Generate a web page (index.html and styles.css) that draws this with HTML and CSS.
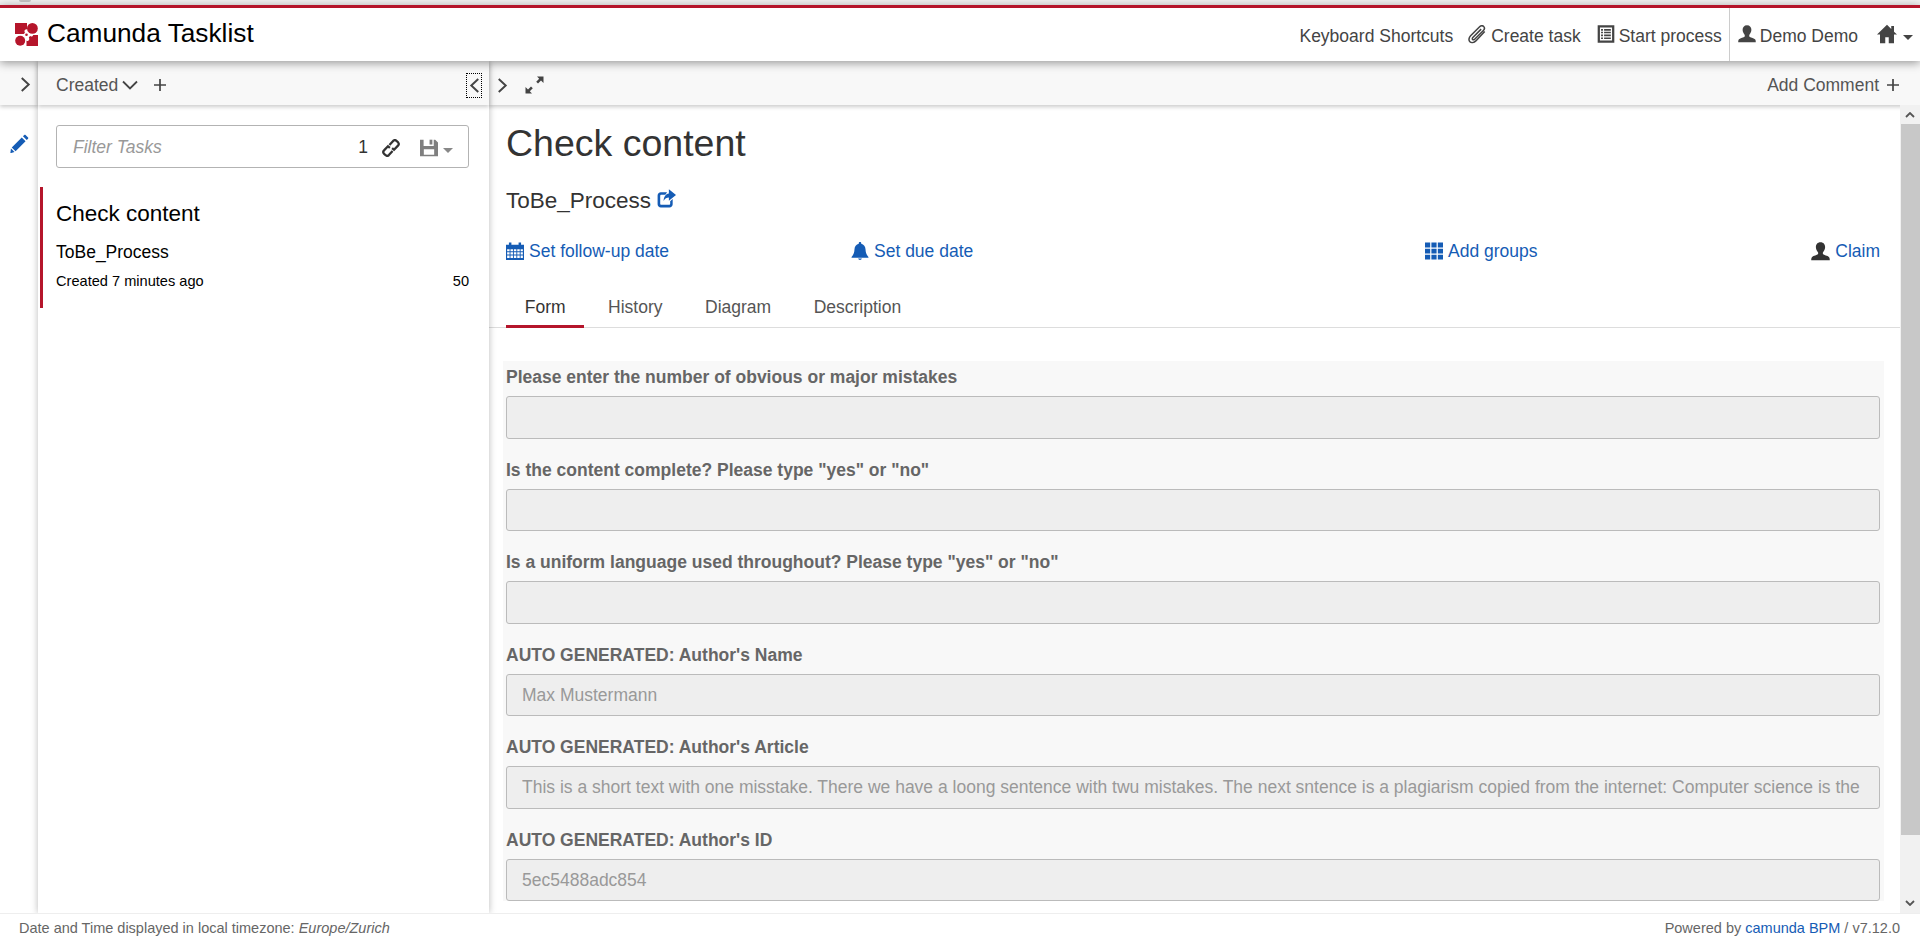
FILE: index.html
```html
<!DOCTYPE html>
<html lang="en">
<head>
  <meta charset="UTF-8" />
  <meta name="viewport" content="width=device-width, initial-scale=1.0" />
  <title>Camunda Tasklist</title>
  <link rel="stylesheet" href="styles.css">
</head>
<body>
  <svg class="sprite" xmlns="http://www.w3.org/2000/svg">
    <symbol id="i-user" viewBox="0 0 16 16"><path d="M8 .2C5.400.2 4.100 2.100 4.100 4.300c0 1.800.9 3.500 1.900 4.500v1.400c-.8 1-4 1.300-5.100 2.400-.6.6-.7 1.700-.7 2.700h15.600c0-1-.1-2.100-.7-2.700-1.100-1.100-4.300-1.400-5.100-2.400V8.800c1-1 1.900-2.700 1.900-4.500C11.900 2.100 10.600.2 8 .2z"/></symbol>
    <symbol id="i-home" viewBox="0 0 16 16"><path d="M8 .6L0 8.400h2.400v7h4.200v-4.800h2.800v4.800h4.200v-7H16l-2.400-2.300V1.600h-2.200v2.400z"/></symbol>
    <symbol id="i-clip" viewBox="0 0 16 16"><path fill="none" stroke="currentColor" stroke-width="1.300" d="M14.500 5.500L7 13.400c-1.500 1.500-3.800 1.900-5 .7-1.200-1.200-.9-3.500.6-5L10 1.700c1.100-1.100 2.700-1.300 3.600-.4.900.9.700 2.500-.4 3.600L6 12c-.5.500-1.300.6-1.700.2-.4-.4-.3-1.200.2-1.700L11.500 3.500"/></symbol>
    <symbol id="i-list" viewBox="0 0 16 16"><path fill-rule="evenodd" d="M.6.2h14.800v15.600H.6zM2.600 2.200v11.600h10.800V2.200z"/><path d="M3.600 3.600h1.700v1.400H3.600zM6.300 3.600h6v1.400h-6zM3.600 6h1.700v1.400H3.600zM6.300 6h6v1.400h-6zM3.600 8.500h1.700v1.400H3.600zM6.300 8.500h6v1.400h-6zM3.600 11h1.700v1.400H3.600zM6.300 11h6v1.400h-6z"/></symbol>
    <symbol id="i-calendar" viewBox="0 0 16 16"><path fill-rule="evenodd" d="M0 2.400h2.600V.4h2.200v2h6.400v-2h2.200v2H16V16H0zM1 6.400v1.900h2.200V6.400zm3 0v1.900h2.200V6.400zm3 0v1.900h2.200V6.400zm3 0v1.900h2.200V6.400zm3 0v1.900h2V6.400zM1 9.200v1.900h2.200V9.200zm3 0v1.900h2.200V9.200zm3 0v1.900h2.200V9.200zm3 0v1.900h2.200V9.200zm3 0v1.900h2V9.200zM1 12v2.300h2.200V12zm3 0v2.300h2.200V12zm3 0v2.300h2.200V12zm3 0v2.300h2.200V12zm3 0v2.300h2V12z"/></symbol>
    <symbol id="i-bell" viewBox="0 0 16 16"><path d="M8 0c-.7 0-1.100.5-1.100 1.100v.5C4.600 2.200 3.200 4.100 3.100 6.500c-.1 3-1 5.200-2.600 6.800v.7h15v-.7c-1.600-1.600-2.500-3.800-2.600-6.800-.1-2.400-1.500-4.300-3.800-4.900v-.5C9.100.5 8.700 0 8 0zM6.300 14.700c.2.800.9 1.300 1.700 1.300s1.500-.5 1.700-1.300z"/></symbol>
    <symbol id="i-grid" viewBox="0 0 16 16"><path d="M0 .5h4.600v4.300H0zM5.700.5h4.600v4.300H5.700zM11.400.5H16v4.300h-4.600zM0 5.900h4.600v4.300H0zM5.700 5.900h4.600v4.300H5.700zM11.400 5.900H16v4.300h-4.600zM0 11.300h4.600v4.300H0zM5.700 11.300h4.600v4.300H5.700zM11.400 11.300H16v4.300h-4.600z"/></symbol>
    <symbol id="i-share" viewBox="0 0 16 16"><path d="M3.200 2.800h5.300L7 4.900H3.600c-.5 0-.9.400-.9.900v6.600c0 .5.400.9.900.9h6.600c.5 0 .9-.4.900-.9v-2l2.100-2v4.400c0 1.500-1.200 2.700-2.700 2.700H3.200C1.700 15.500.5 14.300.5 12.800V5.500c0-1.500 1.200-2.700 2.700-2.700z"/><path d="M10 .2l6 4.800-6 4.900V7.200C8.200 7.200 6.700 8 5.600 10c0-3.300 1.700-6 4.400-6.300z"/></symbol>
    <symbol id="i-link" viewBox="0 0 16 16"><path fill="none" stroke="currentColor" stroke-width="2" d="M6.600 5.400l3.300-3.700c.9-.9 2-.9 2.900-.1l1.500 1.400c.8.900.8 2-.1 2.900l-3.500 3.700-1.700-1.500M9.400 10.600l-3.300 3.700c-.9.900-2 .9-2.900.1l-1.500-1.400c-.8-.9-.8-2 .1-2.900l3.500-3.700 1.700 1.500"/></symbol>
    <symbol id="i-save" viewBox="0 0 16 16"><path fill-rule="evenodd" d="M0 .6h3.200v5.600h9V.6h1.300L16 3.100v12.300H0zM3.400 9.200v4.800h9.200V9.200z"/><path d="M8.500.6H11v4.300H8.500z"/></symbol>
    <symbol id="i-pencil" viewBox="0 0 16 16"><path d="M12 .8c.3-.3.8-.3 1.100 0l2.100 2.100c.3.300.3.800 0 1.100l-1.100 1.100-3.200-3.200zM9.900 2.900l3.200 3.200-8.400 8.400-3.200-3.200zM.8 12.200l3 3-3.500 1z"/></symbol>
    <symbol id="i-expand" viewBox="0 0 19 18"><path d="M12 .5h6.500V7L16 4.600l-3 3-1.800-1.800 3-3zM7 17.500H.5V11L3 13.400l3-3 1.800 1.800-3 3z"/></symbol>
    <symbol id="i-logo" viewBox="0 0 23 23">
      <path d="M0 0h12v6.300c-1.300-.2-2.400.6-2.500 1.800-.1.700.1 1.200.5 1.600l-1.300 1.300H0z"/>
      <circle cx="17.400" cy="5.400" r="5.400"/>
      <circle cx="5.200" cy="17.800" r="5"/>
      <path d="M23 23H11.500v-5.200c1.200.4 2.400-.2 2.700-1.400.2-.8 0-1.400-.4-1.900l1.300-1.400c.6.500 1.300.6 2 .3.600-.3 1-.8 1.100-1.400H23z"/>
      <circle cx="11.500" cy="11.800" r="1.300"/>
    </symbol>
  </svg>

  <div class="top-strip"><span class="top-blob"></span></div>

  <header class="header">
    <a class="brand">
      <svg class="logo"><use href="#i-logo"/></svg>
      <span>Camunda Tasklist</span>
    </a>
    <nav class="nav">
      <a class="nav-item">Keyboard Shortcuts</a>
      <a class="nav-item nav-create"><svg class="icon clip"><use href="#i-clip"/></svg>Create task</a>
      <a class="nav-item nav-start"><svg class="icon"><use href="#i-list"/></svg>Start process</a>
      <a class="nav-item nav-user"><svg class="icon"><use href="#i-user"/></svg>Demo Demo</a>
      <a class="nav-item nav-home"><svg class="icon home"><use href="#i-home"/></svg><span class="caret"></span></a>
    </nav>
  </header>

  <main class="main">
    <aside class="rail">
      <div class="toolbar rail-bar">
        <svg class="chevron" viewBox="0 0 10 14"><path d="M1.500 1l6.500 6-6.500 6"/></svg>
      </div>
      <svg class="pencil"><use href="#i-pencil"/></svg>
    </aside>

    <section class="list">
      <div class="toolbar list-bar">
        <span>Created</span>
        <svg class="chevron-down" viewBox="0 0 16 10"><path d="M1 1.500l7 7 7-7"/></svg>
        <svg class="plus" viewBox="0 0 12 12"><path d="M6 0v12M0 6h12"/></svg>
        <button class="collapse" type="button">
          <svg class="chevron" viewBox="0 0 10 14"><path d="M8.500 1L2 7l6.500 6"/></svg>
        </button>
      </div>
      <div class="filter">
        <span class="filter-text">Filter Tasks</span>
        <span class="filter-count">1</span>
        <svg class="icon filter-link"><use href="#i-link"/></svg>
        <svg class="icon filter-save"><use href="#i-save"/></svg>
        <span class="caret caret-grey"></span>
      </div>
      <article class="task">
        <h3 class="task-name">Check content</h3>
        <div class="task-process">ToBe_Process</div>
        <div class="task-meta"><span>Created 7 minutes ago</span><span>50</span></div>
      </article>
    </section>

    <section class="detail">
      <div class="toolbar detail-bar">
        <svg class="chevron" viewBox="0 0 10 14"><path d="M1.500 1l6.500 6-6.500 6"/></svg>
        <svg class="expand"><use href="#i-expand"/></svg>
        <a class="add-comment">Add Comment</a>
        <svg class="plus" viewBox="0 0 12 12"><path d="M6 0v12M0 6h12"/></svg>
      </div>
      <div class="detail-body">
        <div class="detail-content">
          <div class="task-head">
            <h2 class="title">Check content</h2>
            <div class="process">ToBe_Process <svg class="icon link-blue"><use href="#i-share"/></svg></div>
            <div class="actions">
              <a class="action"><svg class="icon"><use href="#i-calendar"/></svg>Set follow-up date</a>
              <a class="action"><svg class="icon"><use href="#i-bell"/></svg>Set due date</a>
              <a class="action"><svg class="icon"><use href="#i-grid"/></svg>Add groups</a>
              <a class="action"><svg class="icon dark"><use href="#i-user"/></svg>Claim</a>
            </div>
          </div>
          <ul class="tabs">
            <li class="tab active">Form</li>
            <li class="tab">History</li>
            <li class="tab">Diagram</li>
            <li class="tab">Description</li>
          </ul>
          <form class="form">
            <div class="field">
              <label>Please enter the number of obvious or major mistakes</label>
              <input type="text" disabled>
            </div>
            <div class="field">
              <label>Is the content complete? Please type "yes" or "no"</label>
              <input type="text" disabled>
            </div>
            <div class="field">
              <label>Is a uniform language used throughout? Please type "yes" or "no"</label>
              <input type="text" disabled>
            </div>
            <div class="field">
              <label>AUTO GENERATED: Author's Name</label>
              <input type="text" disabled value="Max Mustermann">
            </div>
            <div class="field">
              <label>AUTO GENERATED: Author's Article</label>
              <input type="text" disabled value="This is a short text with one misstake. There we have a loong sentence with twu mistakes. The next sntence is a plagiarism copied from the internet: Computer science is the study of algorithmic processes and computational machines.">
            </div>
            <div class="field">
              <label>AUTO GENERATED: Author's ID</label>
              <input type="text" disabled value="5ec5488adc854">
            </div>
          </form>
        </div>
        <div class="scrollbar">
          <svg class="scroll-arrow" viewBox="0 0 10 6"><path d="M1 5l4-4 4 4"/></svg>
          <div class="scroll-thumb"></div>
          <svg class="scroll-arrow" viewBox="0 0 10 6"><path d="M1 1l4 4 4-4"/></svg>
        </div>
      </div>
    </section>
  </main>

  <footer class="footer">
    <span>Date and Time displayed in local timezone: <em>Europe/Zurich</em></span>
    <span>Powered by <a class="footer-link">camunda BPM</a> / v7.12.0</span>
  </footer>
</body>
</html>
```

FILE: styles.css
```css
* {
  box-sizing: border-box;
}
html, body {
  height: 100%;
  margin: 0;
}
body {
  display: flex;
  flex-direction: column;
  overflow: hidden;
  font-family: "Liberation Sans", Arial, sans-serif;
  font-size: 17.5px;
  line-height: 25px;
  color: #333;
  background: #fff;
}
.sprite {
  display: none;
}
.icon {
  width: 18px;
  height: 18px;
  fill: currentColor;
  flex: none;
}

/* top */
.top-strip {
  height: 5px;
  background: #f1f1f1;
  overflow: hidden;
}
.top-blob {
  display: block;
  width: 12px;
  height: 2px;
  margin-left: 19px;
  background: #c4c4c4;
  border-radius: 0 0 6px 6px;
}
.header {
  display: flex;
  justify-content: space-between;
  height: 56px;
  border-top: 3px solid #b5152b;
  background: #fff;
  box-shadow: 0 2px 9px rgba(0, 0, 0, .4);
  position: relative;
  z-index: 3;
}
.brand {
  display: flex;
  align-items: center;
  gap: 9px;
  padding: 0 0 2px 15px;
  font-size: 26.25px;
  color: #000;
}
.logo {
  width: 23px;
  height: 23px;
  margin-top: 2px;
  fill: #b5152b;
}
.nav {
  display: flex;
  padding: 0 7px 0 0;
}
.nav-item {
  display: flex;
  align-items: center;
  gap: 4px;
  margin-left: 15px;
  padding-top: 3px;
  color: #444;
  white-space: nowrap;
}
.nav-item .icon {
  margin-bottom: 4px;
}
.nav-create {
  margin-left: 14px;
}
.nav-start {
  margin-left: 16px;
}
.nav-user {
  margin-left: 7px;
  padding-left: 8px;
  border-left: 1px solid #ccc;
}
.nav-home {
  margin-left: 19px;
  gap: 6px;
}
.clip {
  width: 20px;
  height: 19px;
}
.home {
  width: 20px;
  height: 20px;
}
.caret {
  width: 0;
  height: 0;
  margin-top: 2px;
  border-top: 5px solid #444;
  border-left: 5px solid transparent;
  border-right: 5px solid transparent;
}
.caret-grey {
  border-top-color: #888;
}

/* columns */
.main {
  flex: 1;
  min-height: 0;
  display: flex;
}
.toolbar {
  flex: none;
  display: flex;
  align-items: center;
  height: 44px;
  padding-top: 3px;
  background: #f8f8f8;
  box-shadow: 0 2px 4px rgba(0, 0, 0, .2);
  color: #555;
}
.chevron {
  width: 11px;
  height: 15px;
  fill: none;
  stroke: #444;
  stroke-width: 1.8;
}
.chevron-down {
  width: 16px;
  height: 10px;
  margin-left: 4px;
  fill: none;
  stroke: #444;
  stroke-width: 1.8;
}
.plus {
  width: 12px;
  height: 12px;
  fill: none;
  stroke: #444;
  stroke-width: 1.7;
}
.rail {
  flex: none;
  width: 38px;
}
.rail-bar {
  justify-content: flex-end;
  padding-right: 7px;
}
.pencil {
  display: block;
  width: 19px;
  height: 19px;
  margin: 29px 0 0 10px;
  fill: #155cb5;
}
.list {
  flex: none;
  width: 451px;
  background: #fff;
  box-shadow: 0 0 7px rgba(0, 0, 0, .28);
  position: relative;
  z-index: 1;
}
.list-bar {
  padding: 4px 7px 0 18px;
}
.list-bar .plus {
  margin-left: 16px;
}
.collapse {
  display: flex;
  align-items: center;
  justify-content: center;
  width: 16px;
  height: 25px;
  margin-left: auto;
  padding: 0;
  background: none;
  border: 1px dotted #000;
}
.filter {
  display: flex;
  align-items: center;
  height: 43px;
  margin: 20px 20px 19px 18px;
  padding: 2px 15px 0 16px;
  border: 1px solid #b3b3b3;
  border-radius: 3px;
}
.filter-text {
  flex: 1;
  font-style: italic;
  color: #999;
}
.filter-count {
  color: #333;
}
.filter-link {
  margin-left: 14px;
  color: #333;
}
.filter-save {
  margin-left: 20px;
  color: #7f7f7f;
}
.filter .caret {
  margin: 5px 0 0 5px;
}
.task {
  height: 121px;
  margin-left: 2px;
  padding: 12px 20px 0 13px;
  border-left: 3px solid #b5152b;
  color: #000;
}
.task-name {
  margin: 0;
  font-size: 22.5px;
  font-weight: 400;
  line-height: 30px;
}
.task-process {
  margin-top: 11px;
}
.task-meta {
  display: flex;
  justify-content: space-between;
  margin-top: 4px;
  font-size: 14.6px;
}

/* detail */
.detail {
  flex: 1;
  min-width: 0;
  display: flex;
  flex-direction: column;
}
.detail-bar {
  padding: 4px 21px 0 8px;
}
.expand {
  width: 19px;
  height: 18px;
  margin-left: 17px;
  fill: #444;
}
.add-comment {
  margin: 0 8px 0 auto;
}
.detail-body {
  flex: 1;
  min-height: 0;
  display: flex;
}
.detail-content {
  flex: 1;
  min-width: 0;
  overflow: hidden;
}
.task-head {
  padding: 18px 20px 0 17px;
}
.title {
  margin: 0;
  font-size: 37.5px;
  font-weight: 400;
  line-height: 41px;
}
.process {
  display: flex;
  align-items: center;
  gap: 6px;
  margin-top: 21px;
  font-size: 22.5px;
  line-height: 31px;
}
.link-blue {
  width: 19px;
  height: 19px;
  color: #155cb5;
  margin-bottom: 4px;
}
.actions {
  display: grid;
  grid-template-columns: 345px 574px 1fr auto;
  margin-top: 23px;
}
.action {
  display: flex;
  align-items: center;
  gap: 5px;
  color: #155cb5;
}
.action .icon {
  margin-bottom: 1px;
}
.dark {
  width: 19px;
  height: 19px;
  color: #333;
}
.tabs {
  display: flex;
  gap: 5px;
  height: 50px;
  margin: 14px 0 0;
  padding: 0 0 0 17px;
  list-style: none;
  border-bottom: 1px solid #ddd;
}
.tab {
  padding: 17px 18.75px 0;
  color: #555;
}
.active {
  height: 50px;
  color: #333;
  border-bottom: 3px solid #b5152b;
}
.form {
  margin: 33px 16px 0 14px;
  padding: 4px 4px 0 3px;
  background: #f8f8f8;
}
.field {
  margin-bottom: 18.75px;
}
.field label {
  display: block;
  margin-bottom: 6.25px;
  font-weight: 700;
  color: #666;
}
.field input {
  display: block;
  width: 100%;
  height: 42.5px;
  padding: 0 15px;
  font: inherit;
  color: #999;
  background: #eee;
  border: 1px solid #bbb;
  border-radius: 3px;
}
.scrollbar {
  flex: none;
  display: flex;
  flex-direction: column;
  align-items: center;
  width: 20px;
  background: #f1f1f1;
}
.scroll-arrow {
  flex: none;
  width: 10px;
  height: 6px;
  margin: 7px 0;
  fill: none;
  stroke: #555;
  stroke-width: 1.8;
}
.scroll-thumb {
  width: 19px;
  height: 717px;
  margin-top: -1px;
  margin-bottom: 58px;
  background: #c8c8c8;
}

/* footer */
.footer {
  flex: none;
  display: flex;
  justify-content: space-between;
  align-items: center;
  height: 30px;
  padding: 0 20px 0 19px;
  border-top: 1px solid #eee;
  font-size: 14.5px;
  color: #666;
  background: #fff;
  position: relative;
  z-index: 2;
}
.footer-link {
  color: #155cb5;
}
```
